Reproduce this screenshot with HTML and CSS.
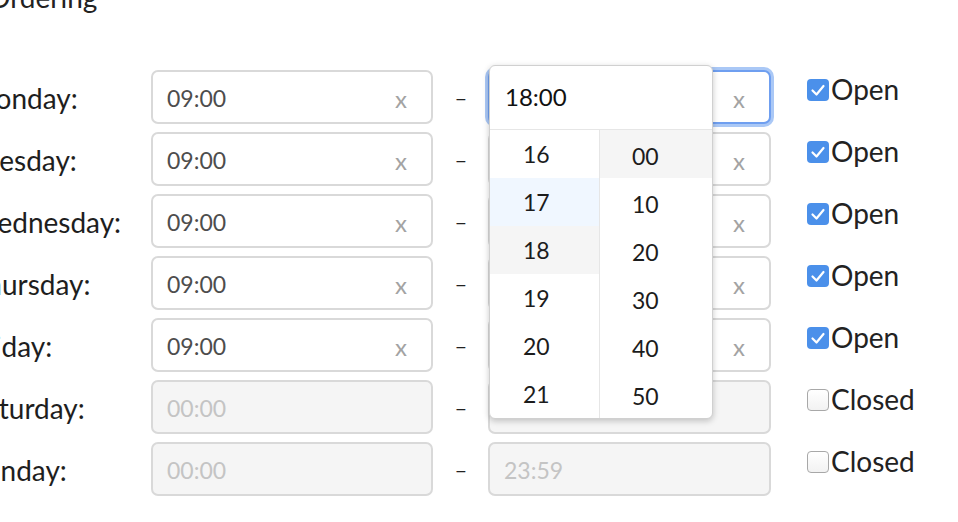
FILE: index.html
```html
<!DOCTYPE html>
<html>
<head>
<meta charset="utf-8">
<link rel="stylesheet" href="styles.css">
</head>
<body>
<div class="page">
  <h2 class="title">Ordering</h2>
  <div class="rows">
    <div class="row">
      <div class="label">Monday:</div>
      <div class="field"><span class="val">09:00</span><span class="clear">x</span></div>
      <div class="dash">–</div>
      <div class="picker-wrap">
        <div class="field focused"><span class="val"></span><span class="clear">x</span></div>
        <div class="dropdown">
          <div class="dd-head">18:00</div>
          <div class="dd-cols">
            <ul class="dd-col hours">
              <li>16</li>
              <li class="hover">17</li>
              <li class="sel">18</li>
              <li>19</li>
              <li>20</li>
              <li>21</li>
            </ul>
            <ul class="dd-col mins">
              <li class="sel">00</li>
              <li>10</li>
              <li>20</li>
              <li>30</li>
              <li>40</li>
              <li>50</li>
            </ul>
          </div>
        </div>
      </div>
      <label class="check"><span class="box on"><svg viewBox="0 0 22 22" width="22" height="22"><polyline points="5.5,11.5 9.5,15.5 16.5,7" fill="none" stroke="#fff" stroke-width="2.2" stroke-linecap="round" stroke-linejoin="round"/></svg></span>Open</label>
    </div>
    <div class="row">
      <div class="label">Tuesday:</div>
      <div class="field"><span class="val">09:00</span><span class="clear">x</span></div>
      <div class="dash">–</div>
      <div class="field"><span class="val"></span><span class="clear">x</span></div>
      <label class="check"><span class="box on"><svg viewBox="0 0 22 22" width="22" height="22"><polyline points="5.5,11.5 9.5,15.5 16.5,7" fill="none" stroke="#fff" stroke-width="2.2" stroke-linecap="round" stroke-linejoin="round"/></svg></span>Open</label>
    </div>
    <div class="row">
      <div class="label">Wednesday:</div>
      <div class="field"><span class="val">09:00</span><span class="clear">x</span></div>
      <div class="dash">–</div>
      <div class="field"><span class="val"></span><span class="clear">x</span></div>
      <label class="check"><span class="box on"><svg viewBox="0 0 22 22" width="22" height="22"><polyline points="5.5,11.5 9.5,15.5 16.5,7" fill="none" stroke="#fff" stroke-width="2.2" stroke-linecap="round" stroke-linejoin="round"/></svg></span>Open</label>
    </div>
    <div class="row">
      <div class="label">Thursday:</div>
      <div class="field"><span class="val">09:00</span><span class="clear">x</span></div>
      <div class="dash">–</div>
      <div class="field"><span class="val"></span><span class="clear">x</span></div>
      <label class="check"><span class="box on"><svg viewBox="0 0 22 22" width="22" height="22"><polyline points="5.5,11.5 9.5,15.5 16.5,7" fill="none" stroke="#fff" stroke-width="2.2" stroke-linecap="round" stroke-linejoin="round"/></svg></span>Open</label>
    </div>
    <div class="row">
      <div class="label">Friday:</div>
      <div class="field"><span class="val">09:00</span><span class="clear">x</span></div>
      <div class="dash">–</div>
      <div class="field"><span class="val"></span><span class="clear">x</span></div>
      <label class="check"><span class="box on"><svg viewBox="0 0 22 22" width="22" height="22"><polyline points="5.5,11.5 9.5,15.5 16.5,7" fill="none" stroke="#fff" stroke-width="2.2" stroke-linecap="round" stroke-linejoin="round"/></svg></span>Open</label>
    </div>
    <div class="row">
      <div class="label">Saturday:</div>
      <div class="field disabled"><span class="val">00:00</span></div>
      <div class="dash">–</div>
      <div class="field disabled"><span class="val"></span></div>
      <label class="check"><span class="box"></span>Closed</label>
    </div>
    <div class="row">
      <div class="label">Sunday:</div>
      <div class="field disabled"><span class="val">00:00</span></div>
      <div class="dash">–</div>
      <div class="field disabled"><span class="val">23:59</span></div>
      <label class="check"><span class="box"></span>Closed</label>
    </div>
  </div>
</div>
</body>
</html>
```

FILE: styles.css
```css
html, body {
  margin: 0;
  padding: 0;
  background: #fff;
  overflow: hidden;
}

body {
  font-family: Lato, "Noto Sans", sans-serif;
  color: #222;
}

.page {
  margin-left: -30px;
}

.title {
  margin: -18px 0 0 18px;
  font-size: 28px;
  line-height: 30px;
  font-weight: 400;
  color: #222;
}

.rows {
  margin-top: 58px;
  display: flex;
  flex-direction: column;
  gap: 8px;
}

.row {
  display: grid;
  grid-template-columns: 181px 282px 55px 283px auto;
  height: 54px;
  align-items: center;
}

.label {
  font-size: 28px;
  color: #1e1e1e;
  padding-top: 2px;
  white-space: nowrap;
}

.field {
  box-sizing: border-box;
  height: 54px;
  border: 2px solid #d9d9d9;
  border-radius: 7px;
  background: #fff;
  display: flex;
  align-items: center;
  justify-content: space-between;
  padding: 0 24px 0 14px;
  font-size: 23px;
  color: #4d4d4d;
}

.field .val {
  padding-top: 1px;
}

.field .clear {
  color: #a3a3a3;
  font-size: 24px;
  padding-top: 3px;
}

.field.disabled {
  background: #f5f5f5;
  color: #c4c4c4;
}

.field.focused {
  border-color: #6f9ff0;
  box-shadow: 0 0 0 3px #aac8f6;
}

.dash {
  text-align: center;
  font-size: 22px;
  color: #222;
  padding-left: 1px;
}

.picker-wrap {
  position: relative;
}

.dropdown {
  position: absolute;
  left: 1px;
  top: -5px;
  width: 224px;
  height: 354px;
  box-sizing: border-box;
  border: 1px solid #d0d0d0;
  border-radius: 6px;
  background: #fff;
  box-shadow: 0 2px 6px rgba(0, 0, 0, 0.22);
  overflow: hidden;
  z-index: 2;
  display: flex;
  flex-direction: column;
}

.dd-head {
  box-sizing: border-box;
  height: 65px;
  border-bottom: 1px solid #e6e6e6;
  padding: 0 0 3px 15px;
  display: flex;
  align-items: center;
  font-size: 24px;
  color: #111;
}

.dd-cols {
  display: grid;
  grid-template-columns: 110px 1fr;
  flex: 1;
}

.dd-col {
  list-style: none;
  margin: 0;
  padding: 0;
}

.dd-col.hours {
  border-right: 1px solid #e6e6e6;
}

.dd-col li {
  height: 48px;
  display: flex;
  align-items: center;
  padding-left: 33px;
  font-size: 23px;
  color: #1c1c1c;
}

.dd-col.mins li {
  padding-left: 32px;
  padding-top: 3px;
  box-sizing: border-box;
}

.dd-col li.hover {
  background: #f0f7ff;
}

.dd-col li.sel {
  background: #f5f5f5;
}

.check {
  align-self: start;
  display: flex;
  align-items: center;
  margin-top: 5px;
  padding-left: 36px;
  font-size: 28px;
  color: #222;
  line-height: 28px;
}

.box {
  box-sizing: border-box;
  width: 22px;
  height: 22px;
  border-radius: 4px;
  border: 1px solid #a8a8a8;
  background: linear-gradient(#fff, #f2f2f2);
  margin-right: 2px;
  flex: none;
  display: flex;
  margin-top: 1px;
}

.box.on {
  border: none;
  background: #4b90ea;
}

.box svg {
  display: block;
}
```
